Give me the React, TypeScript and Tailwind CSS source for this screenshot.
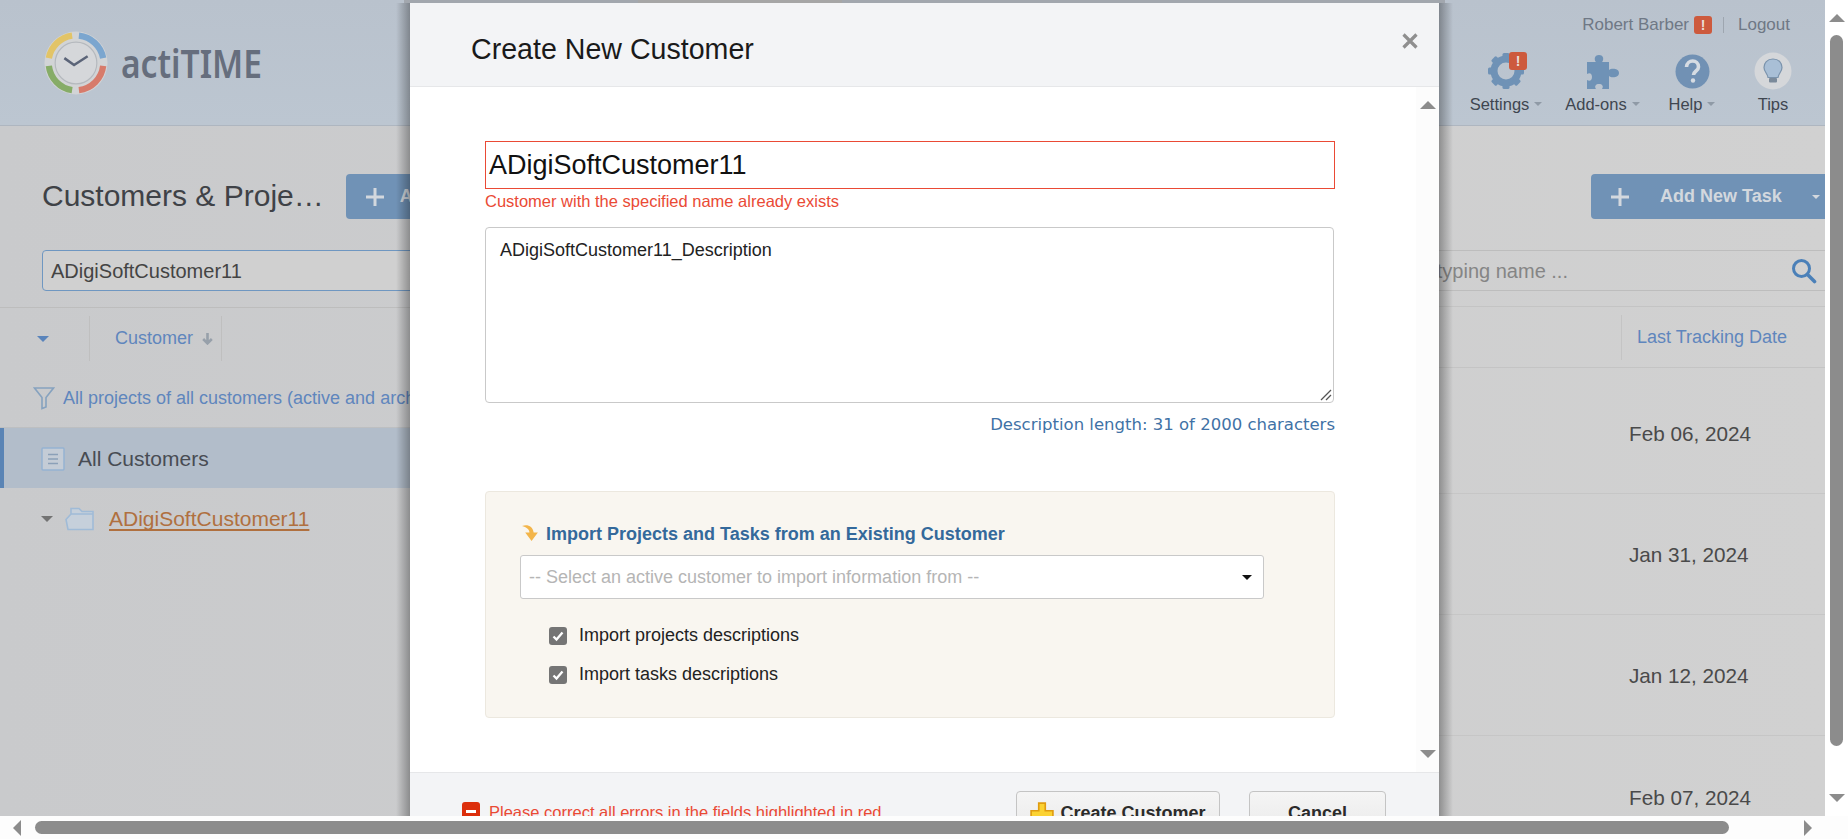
import React from "react";

function Caret() {
  return <span className="inline-block w-0 h-0 border-l-[4px] border-r-[4px] border-t-[4px] border-l-transparent border-r-transparent border-t-[#8f9aa6]" />;
}

function Plus({ fill = "#d3d8de" }: { fill?: string }) {
  return (
    <svg width="18" height="18" viewBox="0 0 18 18" className="shrink-0">
      <path d="M7.500 0h3v7.500H18v3h-7.500V18h-3v-7.500H0v-3h7.500z" fill={fill} />
    </svg>
  );
}

function Logo() {
  return (
    <svg width="64" height="64" viewBox="0 0 66 66" className="shrink-0">
      <circle cx="33" cy="33" r="32.500" fill="#d2d4d6" />
      <g fill="none" strokeWidth="6.500">
        <path d="M5 28 A28.500 28.500 0 0 1 29 4.800" stroke="#e2c467" />
        <path d="M36 4.800 A28.500 28.500 0 0 1 61 28" stroke="#7ba6cf" />
        <path d="M61 36 A28.500 28.500 0 0 1 36 61" stroke="#d77b6b" />
        <path d="M29 61 A28.500 28.500 0 0 1 5 36" stroke="#86ac67" />
      </g>
      <circle cx="33" cy="33" r="21.500" fill="#d5d7da" stroke="#b5b9be" strokeWidth="1.200" />
      <path d="M21 28 L31 35 L45 26" fill="none" stroke="#5b6478" strokeWidth="2.600" />
    </svg>
  );
}

function Gear() {
  return (
    <svg width="38" height="38" viewBox="0 0 38 38">
      <circle cx="19" cy="19" r="12" fill="none" stroke="#6f92b6" strokeWidth="7" />
      {[0, 45, 90, 135, 180, 225, 270, 315].map((a) => (
        <rect key={a} x="15.500" y="1" width="7" height="7" rx="1.500" fill="#6f92b6" transform={`rotate(${a} 19 19)`} />
      ))}
    </svg>
  );
}

function Puzzle() {
  return (
    <svg width="34" height="35" viewBox="0 0 34 35">
      <path fill="#6f92b6" d="M1 8h9c-2-2-2-7 3-7s5 5 3 7h7v8c2-2 10-2 10 3s-8 5-10 3v13h-7c2-3 0-5-3-5s-5 2-3 5H1V26c3 2 5 0 5-3s-2-5-5-3z" />
    </svg>
  );
}

function Help() {
  return (
    <svg width="35" height="35" viewBox="0 0 35 35">
      <circle cx="17.500" cy="17.500" r="17" fill="#7191b4" />
      <path d="M11.500 13c.5-8 12-8 12 0 0 4-5 4-5 8" fill="none" stroke="#d6dce3" strokeWidth="3.600" />
      <circle cx="18" cy="26.500" r="2.200" fill="#d6dce3" />
    </svg>
  );
}

function Bulb() {
  return (
    <svg width="38" height="38" viewBox="0 0 38 38">
      <circle cx="19" cy="19" r="18.500" fill="#d5d7da" />
      <path d="M19 7c-6 0-9 4-9 8.500 0 4 3.500 6 4 10h10c.5-4 4-6 4-10C28 11 25 7 19 7z" fill="#a9bfd6" stroke="#7b93ac" strokeWidth="1.200" />
      <rect x="15" y="26" width="8" height="4.500" rx="1" fill="#7b8a9a" />
    </svg>
  );
}

function Bang({ className = "" }: { className?: string }) {
  return (
    <span className={"flex items-center justify-center rounded-[3px] bg-[#cd5a3d] text-[#eadfd8] font-bold " + className}>!</span>
  );
}

function NavItem({ icon, label, caret = true, className }: { icon: React.ReactNode; label: string; caret?: boolean; className: string }) {
  return (
    <div className={"flex flex-col items-center shrink-0 " + className}>
      <div className="h-[42px] flex items-center justify-center">{icon}</div>
      <div className="flex items-center gap-[5px] text-[16.500px] leading-[20px] text-[#3f4650] mt-[2px] whitespace-nowrap">
        {label}
        {caret && <Caret />}
      </div>
    </div>
  );
}

function DateRow({ date, last = false }: { date: string; last?: boolean }) {
  return (
    <div className={"h-[121px] flex items-center justify-end pt-[2px] border-[#c6c6c6] " + (last ? "" : "border-b")}>
      <span className="w-[196px] text-[20.700px] text-[#4a4a4a] whitespace-nowrap">{date}</span>
    </div>
  );
}

function Check({ label }: { label: string }) {
  return (
    <label className="flex items-center gap-[12px] h-[39px] text-[18px] text-[#222]">
      <span className="w-[18px] h-[18px] rounded-[3px] bg-[#757575] flex items-center justify-center">
        <svg width="14" height="14" viewBox="0 0 14 14"><path d="M2.500 7.500 L5.500 10.500 L11.500 3.500" fill="none" stroke="#fff" strokeWidth="2.300" /></svg>
      </span>
      {label}
    </label>
  );
}

export default function App() {
  return (
    <div className="relative w-[1848px] h-[839px] overflow-hidden bg-white font-['Liberation_Sans',Arial,sans-serif]">
      <div className="flex h-[816px] w-full">
        {/* Page behind the dialog */}
        <div className="w-[1825px] h-[816px] overflow-hidden bg-gradient-to-r from-[#c9cacc] to-[#d1d1d1]">
          <header className="h-[126px] border-b border-[#aeb6c0] bg-gradient-to-b from-[#b9c2cd] to-[#bcc6d1] flex justify-between">
            <div className="flex items-center gap-[13px] pl-[44px] pt-[1px]">
              <Logo />
              <span className="text-[39px] font-semibold text-[#666e7d] scale-x-[0.86] origin-left font-['Noto_Sans',sans-serif]">actiTIME</span>
            </div>
            <div className="flex flex-col items-end pr-[35px]">
              <div className="flex items-center h-[50px] shrink-0 text-[17px] text-[#6f7885]">
                Robert Barber
                <Bang className="w-[18px] h-[18px] text-[14px] ml-[5px]" />
                <span className="w-px h-[16px] bg-[#9ea6b0] mx-[11px]" />
                <span className="ml-[3px]">Logout</span>
              </div>
              <div className="flex items-start mr-[2px]">
                <div className="relative">
                  <NavItem icon={<Gear />} label="Settings" className="w-[70px]" />
                  <Bang className="absolute right-[14px] top-[2px] w-[18px] h-[18px] text-[14px]" />
                </div>
                <NavItem icon={<Puzzle />} label="Add-ons" className="w-[71px] ml-[26px]" />
                <NavItem icon={<Help />} label="Help" className="w-[44px] ml-[32px]" />
                <NavItem icon={<Bulb />} label="Tips" caret={false} className="w-[30px] ml-[44px]" />
              </div>
            </div>
          </header>

          <div className="h-[124px] flex justify-between pt-[48px] pl-[42px]">
            <div className="flex items-start gap-[22px]">
              <h1 className="text-[30px] leading-[43px] text-[#3f4247] font-normal whitespace-nowrap">Customers &amp; Proje…</h1>
              <button className="h-[45px] w-[66px] overflow-hidden rounded-l-[4px] bg-[#7092b6] flex items-center pl-[20px] gap-[16px] text-[#d3d8de] font-bold text-[18px] whitespace-nowrap">
                <Plus />A
              </button>
            </div>
            <button className="h-[45px] w-[234px] rounded-l-[4px] bg-[#7092b6] flex items-center pl-[20px] text-[#d3d8de] font-bold text-[18px] whitespace-nowrap">
              <Plus />
              <span className="ml-[31px]">Add New Task</span>
              <span className="ml-[30px] w-0 h-0 border-l-[4px] border-r-[4px] border-t-[4px] border-l-transparent border-r-transparent border-t-[#d3d8de]" />
            </button>
          </div>

          <div className="flex">
            <div className="w-[410px] shrink-0 overflow-hidden">
              <div className="pl-[42px]">
                <div className="h-[41px] w-[500px] rounded-[4px] border border-[#6f97c1] bg-[#d0d0d0] flex items-center pl-[8px] text-[20px] text-[#444]">ADigiSoftCustomer11</div>
              </div>
              <div className="mt-[16px] border-t border-[#bdbdbd]" />
              <div className="h-[61px] flex items-center">
                <div className="w-[90px] h-[45px] flex items-center justify-center border-r border-[#bfbfbf]">
                  <span className="w-0 h-0 mr-[4px] border-l-[6px] border-r-[6px] border-t-[6px] border-l-transparent border-r-transparent border-t-[#5a84bb]" />
                </div>
                <div className="w-[132px] h-[45px] flex items-center pl-[25px] border-r border-[#bfbfbf] text-[18px] text-[#5f86bd]">
                  Customer
                  <svg width="13" height="13" viewBox="0 0 12 12" className="ml-[8px]"><path d="M6 1v9M2 6.500 6 10.500 10 6.500" fill="none" stroke="#97a0aa" strokeWidth="2.400" /></svg>
                </div>
              </div>
              <div className="h-[59px] flex items-center pl-[33px] border-b border-[#bdbfc1] text-[18px] text-[#5f86bd]">
                <svg width="22" height="24" viewBox="0 0 22 24" className="mr-[8px] shrink-0"><path d="M1.500 2h19L13 11.500V21l-4 1.500V11.500z" fill="none" stroke="#86a2bf" strokeWidth="1.600" /></svg>
                <span className="whitespace-nowrap overflow-hidden">All projects of all customers (active and arch</span>
              </div>
              <div className="h-[60px] flex items-center bg-[#b2bdca] border-l-[4px] border-[#5a84b5] text-[21px] text-[#484c53] pl-[37px] pt-[1px]">
                <svg width="24" height="24" viewBox="0 0 24 24" className="mr-[13px]">
                  <rect x="1" y="1" width="22" height="22" rx="1" fill="#c4ccd6" stroke="#95b2d2" strokeWidth="1.500" />
                  <path d="M7 7.500h10M7 12h10M7 16.500h10" stroke="#8ba0b8" strokeWidth="1.500" />
                </svg>
                All Customers
              </div>
              <div className="h-[60px] flex items-center pl-[41px] pt-[1px]">
                <span className="w-0 h-0 mr-[12px] border-l-[6px] border-r-[6px] border-t-[6px] border-l-transparent border-r-transparent border-t-[#737373]" />
                <svg width="30" height="26" viewBox="0 0 30 26" className="mr-[14px]">
                  <path d="M6 8V2.500h8l3 3h11v18H3L1 13.500 6 8h22" fill="#c6d0db" stroke="#a0bbd7" strokeWidth="1.600" />
                </svg>
                <span className="text-[21px] text-[#b0703f] underline underline-offset-[3px] decoration-[2px] [text-decoration-skip-ink:none] whitespace-nowrap">ADigiSoftCustomer11</span>
              </div>
            </div>

            <div className="flex-1 flex flex-col items-end">
              <div className="w-[436px] h-[41px] border-y border-[#bdbdbd] flex items-center justify-between pr-[8px]">
                <span className="text-[20px] text-[#858585] whitespace-nowrap">Start typing name ...</span>
                <svg width="26" height="26" viewBox="0 0 26 26"><circle cx="10.500" cy="10.500" r="8" fill="none" stroke="#4b80b8" strokeWidth="3" /><path d="M16.500 16.500 23.500 23.500" stroke="#4b80b8" strokeWidth="3.600" strokeLinecap="round" /></svg>
              </div>
              <div className="mt-[15px] w-full h-[62px] border-y border-[#c4c4c4] flex items-center justify-end">
                <div className="w-[204px] h-[45px] flex items-center pl-[15px] border-l border-[#c4c4c4] text-[18px] text-[#5f86bd] whitespace-nowrap">Last Tracking Date</div>
              </div>
              <div className="w-full mt-[5px] flex flex-col">
                <DateRow date="Feb 06, 2024" />
                <DateRow date="Jan 31, 2024" />
                <DateRow date="Jan 12, 2024" />
                <DateRow date="Feb 07, 2024" last />
              </div>
            </div>
          </div>
        </div>

        {/* Vertical scrollbar */}
        <div className="w-[23px] h-[816px] bg-white flex flex-col items-center">
          <span className="mt-[14px] w-0 h-0 border-l-[8px] border-r-[8px] border-b-[8px] border-l-transparent border-r-transparent border-b-[#8c8c8c]" />
          <span className="mt-[13px] w-[13px] h-[711px] rounded-[7px] bg-[#8c8c8c]" />
          <span className="mt-[48px] w-0 h-0 border-l-[8px] border-r-[8px] border-t-[8px] border-l-transparent border-r-transparent border-t-[#8c8c8c]" />
        </div>
      </div>

      {/* Horizontal scrollbar */}
      <div className="h-[23px] bg-[#fdfdfd] flex items-center pl-[13px]">
        <span className="w-0 h-0 border-t-[8px] border-b-[8px] border-r-[8px] border-t-transparent border-b-transparent border-r-[#8c8c8c]" />
        <span className="ml-[14px] w-[1694px] h-[13px] rounded-[7px] bg-[#8c8c8c]" />
        <span className="ml-[75px] w-0 h-0 border-t-[8px] border-b-[8px] border-l-[8px] border-t-transparent border-b-transparent border-l-[#8c8c8c]" />
      </div>

      {/* Dialog shadow on the top edge and the sides */}
      <div className="absolute left-[404px] top-0 w-[1041px] h-[3px] bg-[#a2a7ae]" />
      <div className="absolute left-[638px] top-0 w-[204px] h-[3px] bg-[#a6a6a6]" />
      <div className="absolute left-[396px] top-[3px] w-[14px] h-[813px] bg-gradient-to-r from-transparent to-[#00000050]" />
      <div className="absolute left-[1439px] top-[3px] w-[14px] h-[813px] bg-gradient-to-l from-transparent to-[#00000050]" />

      {/* Dialog */}
      <div className="absolute left-[410px] top-[3px] w-[1029px] h-[813px] overflow-hidden">
        <div className="h-[900px] rounded-t-[16px] bg-white flex flex-col">
          <div className="h-[84px] shrink-0 bg-[#f3f4f6] border-b border-[#e6e7e9] flex items-center justify-between pl-[61px] pr-[20px] pt-[9px]">
            <h2 className="text-[28.600px] font-normal text-[#1a1a1a]">Create New Customer</h2>
            <svg width="18" height="18" viewBox="0 0 18 18" className="-mt-[17px]"><path d="M2.500 2.500 15.500 15.500M15.500 2.500 2.500 15.500" stroke="#8f8f8f" strokeWidth="3.200" /></svg>
          </div>
          <div className="h-[685px] shrink-0 relative bg-white pl-[75px] pt-[54px]">
            <div className="absolute right-0 top-0 bottom-0 w-[23px] bg-[#fcfcfc] flex flex-col items-center justify-between py-[14px]">
              <span className="w-0 h-0 border-l-[8px] border-r-[8px] border-b-[8px] border-l-transparent border-r-transparent border-b-[#8c8c8c]" />
              <span className="w-0 h-0 border-l-[8px] border-r-[8px] border-t-[8px] border-l-transparent border-r-transparent border-t-[#8c8c8c]" />
            </div>
            <div className="w-[850px] h-[48px] border border-[#ea4a35] flex items-center pl-[3px] text-[27px] text-[#111]">ADigiSoftCustomer11</div>
            <div className="text-[16.500px] leading-[20px] text-[#ea4a35] mt-[2px]">Customer with the specified name already exists</div>
            <div className="relative w-[849px] h-[176px] mt-[16px] rounded-[4px] border border-[#c9c9c9] pl-[14px] pt-[12px] text-[18px] leading-[20px] text-[#222]">
              ADigiSoftCustomer11_Description
              <svg width="12" height="12" viewBox="0 0 12 12" className="absolute right-[1px] bottom-[1px]"><path d="M1 11 11 1M6 11 11 6" stroke="#555" strokeWidth="1.300" /></svg>
            </div>
            <div className="w-[850px] text-right mt-[12px] font-['DejaVu_Sans',sans-serif] text-[16.500px] leading-[20px] text-[#3f72a6]">Description length: 31 of 2000 characters</div>
            <div className="w-[850px] h-[227px] mt-[56px] rounded-[4px] border border-[#ece8df] bg-[#f9f6f0] pl-[34px] pt-[32px]">
              <div className="flex items-center h-[20px] text-[18px] font-bold text-[#34699b]">
                <svg width="19" height="19" viewBox="0 0 18 18" className="ml-[1px] mr-[6px] -mt-[2px]"><path d="M1 2C6 0 11 2 12 8h4l-6 8-6-8h4C8 5 5 3 1 2z" fill="#f3b54a" /></svg>
                Import Projects and Tasks from an Existing Customer
              </div>
              <div className="w-[744px] h-[44px] mt-[11px] rounded-[3px] border border-[#c9c9c9] bg-white flex items-center justify-between pl-[8px] pr-[11px] text-[18px] text-[#b5b5b5]">
                -- Select an active customer to import information from --
                <span className="w-0 h-0 border-l-[5px] border-r-[5px] border-t-[5px] border-l-transparent border-r-transparent border-t-[#111]" />
              </div>
              <div className="pl-[29px] mt-[17px]">
                <Check label="Import projects descriptions" />
                <Check label="Import tasks descriptions" />
              </div>
            </div>
          </div>
          <div className="h-[131px] shrink-0 bg-[#f3f4f6] border-t border-[#e6e7e9] pt-[18px] pl-[52px] pr-[53px] flex">
            <span className="w-[18px] h-[18px] mt-[11px] rounded-[3px] bg-[#dc2f0c] flex items-center justify-center shrink-0"><span className="w-[10px] h-[3px] bg-white" /></span>
            <span className="ml-[9px] mt-[11px] text-[16.500px] leading-[20px] text-[#ea4a35] whitespace-nowrap">Please correct all errors in the fields highlighted in red</span>
            <button className="ml-auto w-[204px] h-[48px] rounded-[4px] border border-[#c4c4c4] bg-gradient-to-b from-[#f5f5f5] to-[#e8e8e8] flex items-center justify-center gap-[6px] text-[18px] font-bold text-[#2b2b2b] pb-[3px]">
              <svg width="24" height="24" viewBox="0 0 22 22"><path d="M8 1h6v7h7v6h-7v7H8v-7H1V8h7z" fill="#fbd232" stroke="#e09c10" strokeWidth="1.500" /></svg>
              Create Customer
            </button>
            <button className="ml-[29px] w-[137px] h-[48px] rounded-[4px] border border-[#c4c4c4] bg-gradient-to-b from-[#f5f5f5] to-[#e8e8e8] text-[18px] font-bold text-[#2b2b2b] pb-[3px]">Cancel</button>
          </div>
        </div>
      </div>
    </div>
  );
}
